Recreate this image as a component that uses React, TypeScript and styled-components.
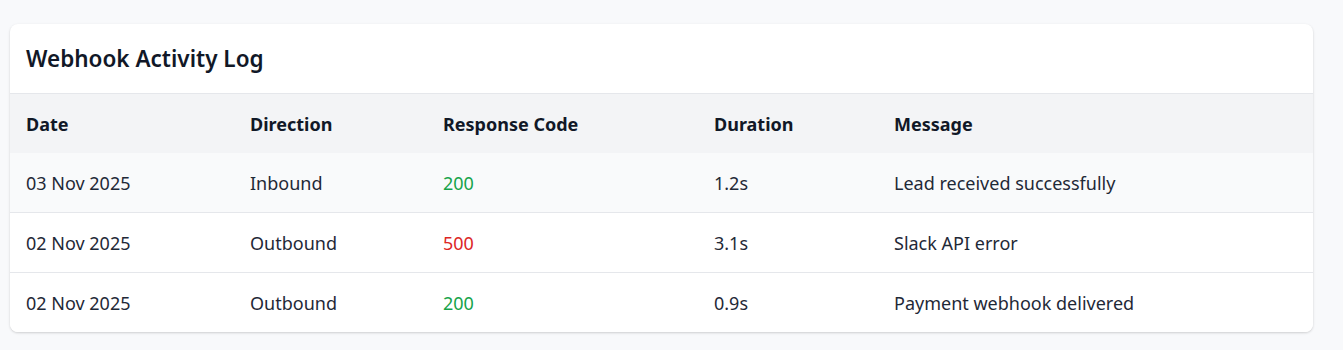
import React from 'react';
import styled, { createGlobalStyle } from 'styled-components';

type Direction = 'Inbound' | 'Outbound';

interface LogEntry {
  date: string;
  direction: Direction;
  code: number;
  duration: string;
  message: string;
}

const entries: LogEntry[] = [
  { date: '03 Nov 2025', direction: 'Inbound', code: 200, duration: '1.2s', message: 'Lead received successfully' },
  { date: '02 Nov 2025', direction: 'Outbound', code: 500, duration: '3.1s', message: 'Slack API error' },
  { date: '02 Nov 2025', direction: 'Outbound', code: 200, duration: '0.9s', message: 'Payment webhook delivered' },
];

const GlobalStyle = createGlobalStyle`
  html, body {
    margin: 0;
    background: #f8f9fb;
    font-family: "Noto Sans", "Open Sans", "Liberation Sans", sans-serif;
    color: #111827;
  }
`;

const Page = styled.div`
  padding: 24px 30px 17px 10px;
`;

const Card = styled.section`
  background: #ffffff;
  border-radius: 8px;
  box-shadow: 0 1px 3px rgba(0, 0, 0, 0.12), 0 1px 2px rgba(0, 0, 0, 0.06);
  overflow: hidden;
`;

const CardHeader = styled.header`
  height: 70px;
  box-sizing: border-box;
  display: flex;
  align-items: center;
  padding: 0 16px;
  border-bottom: 1px solid #e5e7eb;
`;

const Title = styled.h2`
  margin: 0;
  font-size: 22.5px;
  font-weight: 600;
  color: #111827;
`;

const Table = styled.table`
  width: 100%;
  border-collapse: collapse;
  table-layout: fixed;
`;

const HeadRow = styled.tr`
  background: #f3f4f6;
`;

// widths are border-box column widths taken from the reference
const HeadCell = styled.th<{ $width?: number }>`
  box-sizing: border-box;
  width: ${({ $width }) => ($width ? `${$width}px` : 'auto')};
  height: 59px;
  padding: 0 16px;
  text-align: left;
  font-size: 18px;
  font-weight: 700;
  color: #111827;
`;

const Row = styled.tr<{ $striped?: boolean }>`
  background: ${({ $striped }) => ($striped ? '#f9fafb' : '#ffffff')};
  & + & {
    border-top: 1px solid #e5e7eb;
  }
`;

const Cell = styled.td`
  height: 59px;
  padding: 0 16px;
  font-size: 18px;
  color: #1f2937;
`;

const Code = styled(Cell)<{ $ok: boolean }>`
  color: ${({ $ok }) => ($ok ? '#16a34a' : '#dc2626')};
`;

export default function App() {
  return (
    <>
      <GlobalStyle />
      <Page>
        <Card>
          <CardHeader>
            <Title>Webhook Activity Log</Title>
          </CardHeader>
          <Table>
            <thead>
              <HeadRow>
                <HeadCell $width={224}>Date</HeadCell>
                <HeadCell $width={193}>Direction</HeadCell>
                <HeadCell $width={271}>Response Code</HeadCell>
                <HeadCell $width={180}>Duration</HeadCell>
                <HeadCell>Message</HeadCell>
              </HeadRow>
            </thead>
            <tbody>
              {entries.map((e, i) => (
                <Row key={i} $striped={i === 0}>
                  <Cell>{e.date}</Cell>
                  <Cell>{e.direction}</Cell>
                  <Code $ok={e.code < 400}>{e.code}</Code>
                  <Cell>{e.duration}</Cell>
                  <Cell>{e.message}</Cell>
                </Row>
              ))}
            </tbody>
          </Table>
        </Card>
      </Page>
    </>
  );
}
